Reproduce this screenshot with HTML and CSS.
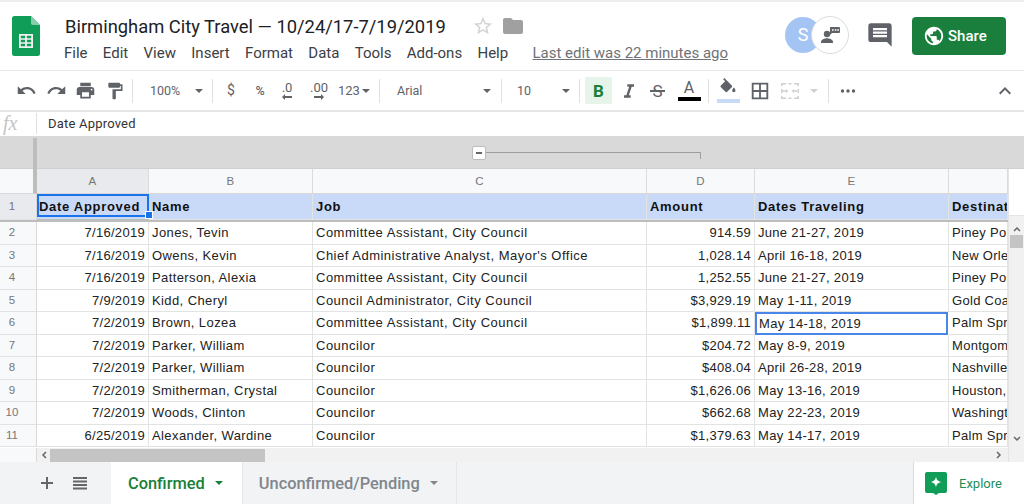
FILE: index.html
```html
<!DOCTYPE html>
<html lang="en">
<head>
    <meta charset="UTF-8">
    <meta name="viewport" content="width=device-width, initial-scale=1.0">
    <title>Birmingham City Travel</title>
    <link rel="stylesheet" href="styles.css">
</head>
<body>
    <div class="app">
        <!-- title and menu -->
        <header class="header">
            <svg class="logo" width="28" height="40" viewBox="0 0 28 40">
                <path fill="#0f9d58" d="M2 0h17l9 9v28.500a2.500 2.500 0 0 1-2.500 2.500H2.500A2.500 2.500 0 0 1 0 37.500V2.500A2.500 2.500 0 0 1 2 0z"/>
                <path fill="#87ceac" d="M19 0l9 9h-7a2 2 0 0 1-2-2z"/>
                <path fill="#f1f1f1" d="M7 18h14v14H7zm1.800 1.800v2.400h4.300v-2.400zm6.100 0v2.400h4.300v-2.400zm-6.100 4v2.400h4.300v-2.400zm6.100 0v2.400h4.300v-2.400zm-6.100 4v2.400h4.300v-2.400zm6.100 0v2.400h4.300v-2.400z"/>
            </svg>
            <div class="doc">
                <div class="doc-title">
                    <span class="doc-name">Birmingham City Travel — 10/24/17-7/19/2019</span>
                    <svg class="star" width="22" height="22" viewBox="0 0 24 24"><path d="M22 9.240l-7.190-.620L12 2 9.190 8.630 2 9.240l5.460 4.730L5.820 21 12 17.270 18.180 21l-1.630-7.030L22 9.240zM12 15.400l-3.760 2.270 1-4.280-3.320-2.880 4.380-.380L12 6.100l1.710 4.040 4.380.380-3.320 2.880 1 4.280L12 15.400z"/></svg>
                    <svg class="folder" width="24" height="24" viewBox="0 0 24 24"><path d="M10 4H4c-1.100 0-1.990.900-1.990 2L2 18c0 1.100.900 2 2 2h16c1.100 0 2-.900 2-2V8c0-1.100-.900-2-2-2h-8l-2-2z"/></svg>
                </div>
                <nav class="menu">
                    <span>File</span><span>Edit</span><span>View</span><span>Insert</span><span>Format</span><span>Data</span><span>Tools</span><span>Add-ons</span><span>Help</span>
                    <a class="last-edit">Last edit was 22 minutes ago</a>
                </nav>
            </div>
            <div class="people">
                <div class="avatar">S</div>
                <div class="avatar-more">
                    <svg width="22" height="22" viewBox="0 0 22 22">
                        <circle cx="8" cy="10" r="3.200" fill="#5f6368"/>
                        <path fill="#5f6368" d="M2 18c0-2.600 3.600-3.800 6-3.800s6 1.200 6 3.800v1H2z"/>
                        <path fill="#5f6368" d="M11 3h9a1 1 0 0 1 1 1v4a1 1 0 0 1-1 1h-7l-2 2z"/>
                        <path fill="#fff" d="M13 5.200h1.600v1.600H13zm2.800 0h1.600v1.600h-1.600zm2.600 0H20v1.600h-1.600z"/>
                    </svg>
                </div>
            </div>
            <svg class="comment" width="28" height="28" viewBox="0 0 24 24"><path d="M21.990 4c0-1.100-.890-2-1.990-2H4c-1.100 0-2 .900-2 2v12c0 1.100.900 2 2 2h14l4 4-.010-18zM18 14H6v-2h12v2zm0-3H6V9h12v2zm0-3H6V6h12v2z"/></svg>
            <button class="share">
                <svg width="22" height="22" viewBox="0 0 24 24"><path fill="#fff" d="M12 2C6.480 2 2 6.480 2 12s4.480 10 10 10 10-4.480 10-10S17.520 2 12 2zm-1 17.930c-3.950-.490-7-3.850-7-7.930 0-.620.080-1.210.210-1.790L9 15v1c0 1.100.900 2 2 2v1.930zm6.900-2.540c-.260-.810-1-1.390-1.900-1.390h-1v-3c0-.550-.450-1-1-1H8v-2h2c.550 0 1-.450 1-1V7h2c1.100 0 2-.900 2-2v-.410c2.930 1.190 5 4.060 5 7.410 0 2.080-.800 3.970-2.100 5.390z"/></svg>
                Share
            </button>
        </header>

        <!-- toolbar -->
        <div class="toolbar">
            <span class="tool w30"><svg width="21" height="21" viewBox="0 0 24 24"><path d="M12.500 8c-2.650 0-5.050.990-6.900 2.600L2 7v9h9l-3.620-3.620c1.390-1.160 3.160-1.880 5.120-1.880 3.540 0 6.550 2.310 7.600 5.500l2.370-.780C21.080 11.030 17.150 8 12.500 8z"/></svg></span>
            <span class="tool w30"><svg width="21" height="21" viewBox="0 0 24 24"><path d="M18.400 10.600C16.550 8.990 14.150 8 11.500 8c-4.650 0-8.580 3.030-9.960 7.220L3.900 16c1.050-3.190 4.050-5.500 7.600-5.500 1.950 0 3.730.720 5.120 1.880L13 16h9V7l-3.600 3.600z"/></svg></span>
            <span class="tool w29"><svg width="21" height="21" viewBox="0 0 24 24"><path d="M19 8H5c-1.660 0-3 1.340-3 3v6h4v4h12v-4h4v-6c0-1.660-1.340-3-3-3zm-3 11H8v-5h8v5zm3-7c-.550 0-1-.450-1-1s.450-1 1-1 1 .450 1 1-.450 1-1 1zm-1-9H6v4h12V3z"/></svg></span>
            <span class="tool w30"><svg width="20" height="20" viewBox="0 0 24 24"><path d="M18 4V3c0-.550-.450-1-1-1H5c-.550 0-1 .450-1 1v4c0 .550.450 1 1 1h12c.550 0 1-.450 1-1V6h1v4H9v11c0 .550.450 1 1 1h2c.550 0 1-.450 1-1v-9h8V4h-3z"/></svg></span>
            <span class="sep"></span>
            <span class="select w-zoom"><span>100%</span><i class="caret"></i></span>
            <span class="sep"></span>
            <span class="tool w-dollar txt">$</span>
            <span class="tool w-pct txt small">%</span>
            <span class="tool w-dec0 dec">.0<svg width="10" height="6" viewBox="0 0 10 6"><path d="M0 3l3-3v2h7v2H3v2z"/></svg></span>
            <span class="tool w-dec2 dec">.00<svg width="10" height="6" viewBox="0 0 10 6"><path d="M10 3L7 0v2H0v2h7v2z"/></svg></span>
            <span class="select w-num"><span>123</span><i class="caret"></i></span>
            <span class="sep"></span>
            <span class="select w-font"><span>Arial</span><i class="caret"></i></span>
            <span class="sep"></span>
            <span class="select w-size"><span>10</span><i class="caret"></i></span>
            <span class="sep"></span>
            <span class="tool bold-on">B</span>
            <span class="tool w29 ml"><svg width="20" height="20" viewBox="0 0 24 24"><path d="M10 4v3h2.210l-3.420 10H6v3h8v-3h-2.210l3.420-10H18V4z"/></svg></span>
            <span class="tool w29 strike">S</span>
            <span class="tool w34 color-a"><span>A</span><i class="bar black"></i></span>
            <span class="sep"></span>
            <span class="tool w34 color-a"><svg width="20" height="20" viewBox="0 0 24 24"><path d="M16.560 8.940L7.620 0 6.210 1.410l2.380 2.380-5.150 5.150c-.590.590-.590 1.540 0 2.120l5.500 5.500c.290.290.680.440 1.060.440s.770-.150 1.060-.440l5.500-5.500c.590-.580.590-1.530 0-2.120zM19 11.500s-2 2.170-2 3.500c0 1.100.900 2 2 2s2-.900 2-2c0-1.330-2-3.500-2-3.500z"/></svg><i class="bar blue"></i></span>
            <span class="tool w30"><svg width="22" height="22" viewBox="0 0 24 24"><path d="M3 3v18h18V3H3zm8 16H5v-6h6v6zm0-8H5V5h6v6zm8 8h-6v-6h6v6zm0-8h-6V5h6v6z"/></svg></span>
            <span class="tool w30 muted"><svg width="20" height="20" viewBox="0 0 20 20"><path d="M1 2h5v1.500H2.500V5H1zm13 0h5v3h-1.500V3.500H14zM1 15h1.500v1.500H6V18H1zm16.500 0H19v3h-5v-1.500h3.500zM1 8h1.500v4H1zm16.500 0H19v4h-1.500zM8.500 2h3v1.500h-3zm0 14.500h3V18h-3zM2 9.300h4V8l2.300 2L6 12v-1.300H2zm16 0h-4V8l-2.300 2 2.300 2v-1.300h4z"/></svg></span>
            <i class="caret light"></i>
            <span class="sep sep-more"></span>
            <span class="tool w38"><svg width="20" height="20" viewBox="0 0 20 20"><circle cx="4.500" cy="10" r="1.700"/><circle cx="10" cy="10" r="1.700"/><circle cx="15.500" cy="10" r="1.700"/></svg></span>
            <span class="tool collapse"><svg width="24" height="24" viewBox="0 0 24 24"><path d="M7.410 15.410L12 10.830l4.590 4.580L18 14l-6-6-6 6z"/></svg></span>
        </div>

        <!-- formula bar -->
        <div class="formula">
            <span class="fx">fx</span>
            <span class="formula-text">Date Approved</span>
        </div>

        <!-- sheet -->
        <div class="sheet">
            <div class="group-strip">
                <div class="frozen-corner"></div>
                <div class="group-toggle"></div>
                <div class="group-line"></div>
            </div>
            <div class="sheet-body">
                <div class="cells">
                    <div class="row col-heads">
                        <div class="corner"></div>
                        <div class="head active">A</div><div class="head">B</div><div class="head">C</div><div class="head">D</div><div class="head">E</div><div class="head"></div>
                    </div>
                    <div class="row title-row">
                        <div class="num active">1</div>
                        <div class="cell selected">Date Approved<i class="handle"></i></div><div class="cell">Name</div><div class="cell">Job</div><div class="cell">Amount</div><div class="cell">Dates Traveling</div><div class="cell">Destination</div>
                    </div>
                    <div class="row"><div class="num">2</div><div class="cell r">7/16/2019</div><div class="cell">Jones, Tevin</div><div class="cell">Committee Assistant, City Council</div><div class="cell r">914.59</div><div class="cell">June 21-27, 2019</div><div class="cell">Piney Point</div></div>
                    <div class="row"><div class="num">3</div><div class="cell r">7/16/2019</div><div class="cell">Owens, Kevin</div><div class="cell">Chief Administrative Analyst, Mayor's Office</div><div class="cell r">1,028.14</div><div class="cell">April 16-18, 2019</div><div class="cell">New Orleans</div></div>
                    <div class="row"><div class="num">4</div><div class="cell r">7/16/2019</div><div class="cell">Patterson, Alexia</div><div class="cell">Committee Assistant, City Council</div><div class="cell r">1,252.55</div><div class="cell">June 21-27, 2019</div><div class="cell">Piney Point</div></div>
                    <div class="row"><div class="num">5</div><div class="cell r">7/9/2019</div><div class="cell">Kidd, Cheryl</div><div class="cell">Council Administrator, City Council</div><div class="cell r">$3,929.19</div><div class="cell">May 1-11, 2019</div><div class="cell">Gold Coast</div></div>
                    <div class="row"><div class="num">6</div><div class="cell r">7/2/2019</div><div class="cell">Brown, Lozea</div><div class="cell">Committee Assistant, City Council</div><div class="cell r">$1,899.11</div><div class="cell current">May 14-18, 2019</div><div class="cell">Palm Springs</div></div>
                    <div class="row"><div class="num">7</div><div class="cell r">7/2/2019</div><div class="cell">Parker, William</div><div class="cell">Councilor</div><div class="cell r">$204.72</div><div class="cell">May 8-9, 2019</div><div class="cell">Montgomery</div></div>
                    <div class="row"><div class="num">8</div><div class="cell r">7/2/2019</div><div class="cell">Parker, William</div><div class="cell">Councilor</div><div class="cell r">$408.04</div><div class="cell">April 26-28, 2019</div><div class="cell">Nashville</div></div>
                    <div class="row"><div class="num">9</div><div class="cell r">7/2/2019</div><div class="cell">Smitherman, Crystal</div><div class="cell">Councilor</div><div class="cell r">$1,626.06</div><div class="cell">May 13-16, 2019</div><div class="cell">Houston,</div></div>
                    <div class="row"><div class="num">10</div><div class="cell r">7/2/2019</div><div class="cell">Woods, Clinton</div><div class="cell">Councilor</div><div class="cell r">$662.68</div><div class="cell">May 22-23, 2019</div><div class="cell">Washington</div></div>
                    <div class="row"><div class="num">11</div><div class="cell r">6/25/2019</div><div class="cell">Alexander, Wardine</div><div class="cell">Councilor</div><div class="cell r">$1,379.63</div><div class="cell">May 14-17, 2019</div><div class="cell">Palm Springs</div></div>
                </div>
                <div class="vscroll">
                    <div class="vscroll-top"></div>
                    <div class="vscroll-track">
                        <svg class="arrow" width="8" height="6" viewBox="0 0 8 6"><path d="M1 5l3-3 3 3" /></svg>
                        <div class="vthumb"></div>
                        <svg class="arrow down" width="8" height="6" viewBox="0 0 8 6"><path d="M1 1l3 3 3-3" /></svg>
                    </div>
                </div>
            </div>
            <div class="hscroll">
                <div class="hscroll-gutter"></div>
                <div class="hscroll-track">
                    <svg class="arrow" width="6" height="8" viewBox="0 0 6 8"><path d="M5 1L2 4l3 3" /></svg>
                    <div class="hthumb"></div>
                    <svg class="arrow right" width="6" height="8" viewBox="0 0 6 8"><path d="M1 1l3 3-3 3" /></svg>
                </div>
                <div class="hscroll-end"></div>
            </div>
        </div>

        <!-- sheet tabs -->
        <div class="tabs">
            <svg class="tab-icon add" width="18" height="18" viewBox="0 0 18 18"><path d="M8 3h2v5h5v2h-5v5H8v-5H3V8h5z"/></svg>
            <svg class="tab-icon list" width="18" height="18" viewBox="0 0 18 18"><path d="M2 3h14v2H2zm0 3.500h14v2H2zM2 10h14v2H2zm0 3.500h14v2H2z"/></svg>
            <div class="tab on">Confirmed<i class="caret green"></i></div>
            <div class="tab">Unconfirmed/Pending<i class="caret gray"></i></div>
            <div class="explore">
                <svg width="22" height="23" viewBox="0 0 22 23">
                    <path fill="#0f9d58" d="M2 0h18a2 2 0 0 1 2 2v17a2 2 0 0 1-2 2h-6l-3 2-3-2H2a2 2 0 0 1-2-2V2a2 2 0 0 1 2-2z"/>
                    <path fill="#fff" d="M11 4.500c.6 3.300 1.700 4.900 5.500 5.500-3.800.6-4.900 2.200-5.500 5.500-.6-3.300-1.700-4.900-5.500-5.500 3.800-.6 4.900-2.200 5.500-5.500z"/>
                </svg>
                <span>Explore</span>
            </div>
        </div>
    </div>
</body>
</html>
```

FILE: styles.css
```css
* {
    box-sizing: border-box;
}
body {
    margin: 0;
    background-color: #fff;
    font-family: "Liberation Sans", Arial, sans-serif;
}
.app {
    display: flex;
    flex-direction: column;
    width: 1024px;
    height: 504px;
    overflow: hidden;
}
i {
    display: block;
}

/* header */
.header {
    display: flex;
    align-items: flex-start;
    height: 71px;
    padding: 14px 18px 0 12px;
    border-top: 2px solid #eeeeee;
    border-bottom: 1px solid #e6e6e6;
}
.logo {
    flex: none;
}
.doc {
    width: 700px;
    margin: -5px 0 0 25px;
    font-family: Roboto, sans-serif;
}
.doc-title {
    display: flex;
    align-items: center;
    height: 30px;
}
.doc-name {
    font-size: 18.350px;
    color: #202124;
}
.star {
    margin-left: 26px;
    fill: #d3d3d3;
}
.folder {
    margin-left: 7px;
    fill: #a0a0a0;
}
.menu {
    display: flex;
    align-items: center;
    gap: 15.300px;
    height: 24px;
    margin-left: -1px;
    font-size: 15px;
    color: #3c4043;
}
.last-edit {
    margin-left: 9px;
    color: #6f7377;
    text-decoration: underline;
}
.people {
    display: flex;
    align-items: center;
    margin: 0 0 0 20px;
}
.avatar {
    width: 36px;
    height: 36px;
    border-radius: 50%;
    background-color: #a4c5f4;
    color: #fff;
    font: 18px/36px Roboto, sans-serif;
    text-align: center;
}
.avatar-more {
    display: flex;
    align-items: center;
    justify-content: center;
    width: 38px;
    height: 38px;
    margin-left: -10px;
    border: 1.500px solid #dadce0;
    border-radius: 50%;
    background-color: #fff;
}
.comment {
    margin: 5px 0 0 17px;
    fill: #5f6368;
}
.share {
    display: flex;
    align-items: center;
    gap: 3px;
    width: 94px;
    height: 38px;
    margin: 1px 0 0 18px;
    padding: 0 0 0 11px;
    border: none;
    border-radius: 4px;
    background-color: #1a7f3c;
    color: #fff;
    font: 500 15px Roboto, sans-serif;
}

/* toolbar */
.toolbar {
    display: flex;
    align-items: center;
    height: 41px;
    padding-left: 11px;
    border-bottom: 2px solid #e6e6e6;
    color: #5f6368;
    font-family: Roboto, sans-serif;
    font-size: 12.500px;
}
.toolbar svg {
    fill: #5f6368;
}
.tool {
    display: flex;
    flex: none;
    align-items: center;
    justify-content: center;
    height: 27px;
}
.w29 { width: 29px; }
.w30 { width: 30px; }
.w34 { width: 34px; }
.w38 { width: 38px; }
.w-dollar { width: 32px; }
.w-pct { width: 26px; }
.w-dec0 { width: 28px; }
.w-dec2 { width: 36px; }
.ml { margin-left: 2px; }
.sep {
    flex: none;
    width: 1px;
    height: 24px;
    margin: 0 2px;
    background-color: #e0e0e0;
}
.select {
    display: flex;
    flex: none;
    align-items: center;
    justify-content: space-between;
    height: 27px;
}
.w-zoom {
    width: 75px;
    padding: 0 7px 0 15px;
}
.w-num {
    width: 32px;
    margin: 0 7px 0 1px;
    font-size: 13px;
}
.w-font {
    width: 117px;
    padding: 0 8px 0 15px;
}
.w-size {
    width: 73px;
    padding: 0 7px 0 13px;
}
.caret {
    flex: none;
    width: 0;
    height: 0;
    border-left: 4px solid transparent;
    border-right: 4px solid transparent;
    border-top: 4px solid #5f6368;
}
.caret.light {
    border-top-color: #d0d0d0;
    margin: 0 8px 0 5px;
}
.txt {
    font-size: 14px;
    padding-bottom: 1px;
}
.small {
    font-size: 12.500px;
    font-weight: 500;
}
.dec {
    flex-direction: column;
    font-size: 13px;
    line-height: 12px;
}
.bold-on {
    width: 27px;
    margin-left: 3px;
    background-color: #e6f4ea;
    border-radius: 2px;
    color: #188038;
    font: 700 17px Roboto, sans-serif;
}
.strike {
    position: relative;
    font-size: 17px;
}
.strike::after {
    content: "";
    position: absolute;
    left: 7px;
    top: 13px;
    width: 15px;
    height: 1.500px;
    background-color: #5f6368;
}
.color-a {
    flex-direction: column;
    font-size: 16px;
    line-height: 16px;
}
.bar {
    width: 23px;
    height: 4px;
    margin-top: 1px;
}
.bar.black {
    background-color: #000;
}
.bar.blue {
    background-color: #c9daf8;
}
.muted svg {
    fill: #d0d0d0;
}
.sep-more {
    margin-right: 0;
}
.collapse {
    width: 24px;
    margin-left: 126px;
}

/* formula bar */
.formula {
    display: flex;
    align-items: center;
    height: 26px;
    padding-bottom: 1px;
    border-bottom: 2px solid #d9d9d9;
    color: #333;
}
.fx {
    width: 37px;
    padding-left: 3px;
    border-right: 1px solid #e0e0e0;
    color: #c4c4c4;
    font: italic 20px/21px "Liberation Serif", serif;
}
.formula-text {
    padding-left: 11px;
    font: 13px Roboto, sans-serif;
    letter-spacing: 0.2px;
}

/* sheet */
.sheet {
    display: flex;
    flex-direction: column;
    height: 324px;
}
.group-strip {
    display: flex;
    align-items: flex-start;
    height: 31px;
    background-color: #d9d9d9;
    border-bottom: 1px solid #d0d0d0;
}
.frozen-corner {
    width: 4px;
    height: 31px;
    margin-left: 33px;
    background-color: #bdbdbd;
}
.group-toggle {
    position: relative;
    width: 14px;
    height: 14px;
    margin: 8px 0 0 435px;
    border: 1px solid #bdbdbd;
    border-radius: 2px;
    background-color: #fff;
}
.group-toggle::after {
    content: "";
    position: absolute;
    left: 3px;
    top: 5px;
    width: 6px;
    height: 2px;
    background-color: #666;
}
.group-line {
    width: 215px;
    height: 7px;
    margin-top: 14px;
    border-top: 1px solid #9e9e9e;
    border-right: 1px solid #9e9e9e;
}
.sheet-body {
    display: flex;
    height: 279px;
}
.cells {
    width: 1008px;
    overflow: hidden;
}
.row {
    display: grid;
    grid-template-columns: 37px 112px 164px 334px 108px 194px 59px;
    height: 22.500px;
    font-size: 13px;
    letter-spacing: 0.3px;
    color: #222;
}
.row .cell:nth-child(3) {
    letter-spacing: 0.4px;
}
.row .cell:nth-child(4) {
    letter-spacing: 0.5px;
}
.col-heads {
    height: 25px;
}
.corner {
    background-color: #f8f9fa;
    border-right: 4px solid #bdbdbd;
    border-bottom: 1px solid #d9d9d9;
}
.head {
    background-color: #f8f9fa;
    border-right: 1px solid #dcdcdc;
    border-bottom: 1px solid #d9d9d9;
    color: #777;
    font-size: 11.500px;
    line-height: 24px;
    text-align: center;
}
.head.active,
.num.active {
    background-color: #e8eaed;
}
.num {
    padding-right: 12px;
    background-color: #f8f9fa;
    border-right: 1px solid #d9d9d9;
    border-bottom: 1px solid #e2e2e2;
    color: #777;
    font-size: 11.500px;
    font-weight: 400;
    letter-spacing: 0;
    line-height: 21px;
    text-align: center;
}
.cell {
    padding: 0 3px;
    border-right: 1px solid #e2e3e3;
    border-bottom: 1px solid #e2e3e3;
    line-height: 21px;
    white-space: nowrap;
    overflow: hidden;
}
.cell.r {
    text-align: right;
}
.cell.current {
    margin-right: 1px;
    padding: 0 2px;
    border: 2px solid #4a86e8;
    line-height: 19px;
}
.title-row {
    height: 28px;
    border-bottom: 3px solid #bdbdbd;
    background-color: #c9daf8;
    font-weight: 700;
    color: #111;
}
.title-row .cell,
.title-row .cell:nth-child(3),
.title-row .cell:nth-child(4) {
    padding: 0 2px 0 3px;
    background-color: #c9daf8;
    letter-spacing: 0.7px;
    line-height: 26px;
}
.title-row .num {
    line-height: 25px;
}
.title-row .selected {
    position: relative;
    height: 23px;
    padding-left: 0;
    border: 2px solid #1a73e8;
    line-height: 22px;
    overflow: visible;
}
.handle {
    position: absolute;
    right: -6px;
    bottom: -4px;
    width: 8px;
    height: 8px;
    background-color: #1a73e8;
    border: 1px solid #fff;
}

/* scrollbars */
.arrow {
    flex: none;
    fill: none;
    stroke: #666;
    stroke-width: 1.500;
}
.vscroll {
    display: flex;
    flex-direction: column;
    width: 16px;
    border-left: 1px solid #e4e4e4;
}
.vscroll-top {
    height: 47px;
    background-color: #fff;
    border-bottom: 1px solid #e4e4e4;
}
.vscroll-track {
    display: flex;
    flex: 1;
    flex-direction: column;
    align-items: center;
    padding: 10px 0 6px;
    background-color: #f1f1f1;
}
.vthumb {
    width: 13px;
    height: 13px;
    margin-top: 3px;
    background-color: #c4c4c4;
}
.arrow.down {
    margin-top: auto;
}
.hscroll {
    display: flex;
    height: 14px;
}
.hscroll-gutter {
    width: 37px;
    background-color: #f8f9fa;
    border-right: 1px solid #d9d9d9;
}
.hscroll-track {
    display: flex;
    align-items: center;
    width: 971px;
    padding: 0 6px 0 4px;
    background-color: #f1f1f1;
}
.hthumb {
    width: 215px;
    height: 13px;
    margin-left: 3px;
    background-color: #c4c4c4;
}
.arrow.right {
    margin-left: auto;
}
.hscroll-end {
    width: 16px;
    background-color: #f1f1f1;
    border-left: 1px solid #e4e4e4;
}

/* tabs */
.tabs {
    display: flex;
    flex: 1;
    align-items: stretch;
    background-color: #f1f3f4;
    font-family: Roboto, sans-serif;
}
.tab-icon {
    align-self: center;
    fill: #666;
}
.add {
    margin-left: 38px;
}
.list {
    margin-left: 15px;
}
.tab {
    display: flex;
    align-items: center;
    gap: 10px;
    padding: 0 18px 0 16px;
    color: #80868b;
    font-size: 16.400px;
    font-weight: 500;
    border-right: 1px solid #e4e6e8;
}
.tab.on {
    margin-left: 22px;
    padding: 0 19px 0 17px;
    background-color: #fff;
    color: #188038;
}
.caret.green {
    border-top-color: #188038;
}
.caret.gray {
    border-top-color: #80868b;
}
.explore {
    display: flex;
    align-items: center;
    gap: 12px;
    width: 111px;
    margin-left: auto;
    padding-left: 11px;
    background-color: #fff;
    border-left: 1px solid #dadce0;
    color: #1e8e5a;
    font-size: 13px;
}
```
